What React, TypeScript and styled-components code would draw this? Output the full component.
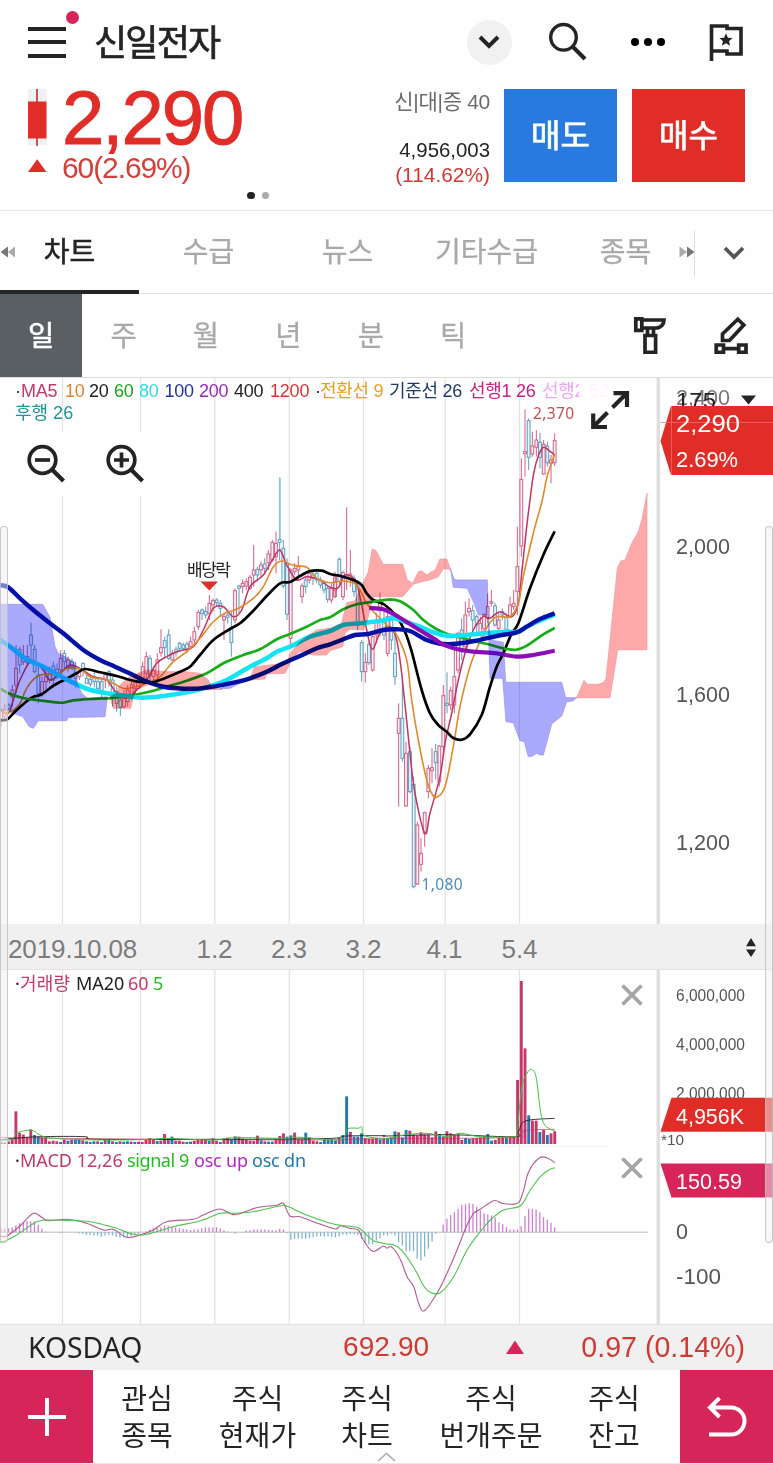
import React from 'react';
import styled, { createGlobalStyle } from 'styled-components';

const SANS = '"Liberation Sans", "Noto Sans CJK KR", sans-serif';
const NOTO = '"Noto Sans", "Noto Sans CJK KR", sans-serif';
const KR = '"Noto Sans CJK KR", "Liberation Sans", sans-serif';

const INK = '#222426';
const RED = '#e02d28';
const CRIMSON = '#d62659';
const UP = '#c4386a';
const DOWN = '#3585ad';

const GlobalStyle = createGlobalStyle`
  * { box-sizing: border-box; }
  body { margin: 0; background: #fff; font-family: ${SANS}; color: ${INK}; }
  button { border: 0; padding: 0; margin: 0; background: none; font: inherit; color: inherit; display: block; }
  svg { display: block; }
`;

const Page = styled.main`
  position: relative;
  width: 773px;
  height: 1464px;
  overflow: hidden;
  background: #fefefe;
  display: flex;
  flex-direction: column;
`;

/* ---------- header ---------- */
const Header = styled.header`
  height: 84px;
  padding: 0 30px 0 28px;
  display: flex;
  align-items: center;
`;
const MenuButton = styled.button`
  position: relative;
  width: 38px;
  height: 31px;
  display: flex;
  flex-direction: column;
  justify-content: space-between;
  margin-right: 28px;
`;
const MenuLine = styled.span`
  height: 4px;
  background: ${INK};
`;
const Alert = styled.i`
  position: absolute;
  left: 38px;
  top: -16px;
  width: 13px;
  height: 13px;
  border-radius: 50%;
  background: ${CRIMSON};
`;
const Title = styled.h1`
  margin: 0;
  flex: 1;
  font: 400 36px/50px ${KR};
  letter-spacing: -1.8px;
  padding-bottom: 4px;
  -webkit-text-stroke: 0.7px ${INK};
`;
const Tools = styled.div`
  display: flex;
  align-items: center;
`;
const Round = styled.button`
  width: 45px;
  height: 45px;
  border-radius: 50%;
  background: #f1f1f1;
  display: grid;
  place-items: center;
`;
const SearchIcon = styled.svg`
  margin-left: 36px;
`;
const DotsIcon = styled.svg`
  margin-left: 42.5px;
`;
const FlagIcon = styled.svg`
  margin-left: 43px;
`;

/* ---------- quote ---------- */
const Quote = styled.section`
  position: relative;
  height: 127px;
  border-bottom: 1px solid #e6e6e6;
  padding: 5px 28px 0 27px;
  display: flex;
`;
const PriceBlock = styled.div`
  width: 320px;
  display: grid;
  grid-template-columns: 35px 1fr;
  grid-template-rows: 61px 36px;
`;
const Price = styled.div`
  font-size: 76px;
  line-height: 57px;
  letter-spacing: -2px;
  color: ${RED};
  -webkit-text-stroke: 0.9px ${RED};
  white-space: nowrap;
`;
const Change = styled.div`
  font-size: 30px;
  line-height: 36px;
  letter-spacing: -1.1px;
  color: #d4403c;
`;
const Stats = styled.div`
  flex: 1;
  text-align: right;
  padding-right: 14px;
  white-space: nowrap;
`;
const Badges = styled.div`
  font: 21px/26px ${SANS};
  letter-spacing: -0.3px;
  color: #6b6b6b;
`;
const Volume = styled.div`
  font-size: 20.4px;
  line-height: 24px;
  margin-top: 23px;
  color: ${INK};
`;
const Ratio = styled.div`
  font-size: 20.9px;
  line-height: 25px;
  color: #cf3a35;
`;
const Trade = styled.button<{ $bg: string }>`
  width: 113px;
  height: 93px;
  background: ${p => p.$bg};
  color: #fff;
  font: 400 32px/89px ${KR};
  padding-bottom: 4px;
  -webkit-text-stroke: 0.7px #fff;
  & + & { margin-left: 15px; }
`;
const Pager = styled.div`
  position: absolute;
  left: 247px;
  top: 107.5px;
  display: flex;
  gap: 7px;
`;
const Dot = styled.i<{ $on?: boolean }>`
  width: 7.5px;
  height: 7.5px;
  border-radius: 50%;
  background: ${p => (p.$on ? '#222' : '#aaa')};
`;

/* ---------- tabs ---------- */
const Tabs = styled.nav`
  height: 83px;
  border-bottom: 1px solid #e2e2e2;
  display: flex;
  align-items: center;
  position: relative;
`;
const Tab = styled.button<{ $on?: boolean }>`
  width: 139px;
  height: 83px;
  font: 400 28px/78px ${KR};
  padding-bottom: 1px;
  color: ${p => (p.$on ? INK : '#a9a9a9')};
  -webkit-text-stroke: ${p => (p.$on ? 0.6 : 0.3)}px currentColor;
  border-bottom: 4px solid ${p => (p.$on ? INK : 'transparent')};
  white-space: nowrap;
  text-align: center;
`;
const ScrollMark = styled.span<{ $right?: boolean }>`
  position: absolute;
  top: 35px;
  ${p => (p.$right ? 'left: 679px;' : 'left: 0;')}
`;
const MoreTabs = styled.button`
  position: absolute;
  left: 694px;
  top: 19px;
  width: 79px;
  height: 46px;
  border-left: 1px solid #ddd;
  background: #fefefe;
  display: grid;
  place-items: center;
`;

const Periods = styled.nav`
  height: 84px;
  border-bottom: 1px solid #dcdcdc;
  display: flex;
  align-items: center;
`;
const Period = styled.button<{ $on?: boolean }>`
  width: 82.4px;
  height: 83px;
  font: 400 28.5px/80px ${KR};
  padding-bottom: 3px;
  background: ${p => (p.$on ? '#5a5f63' : 'transparent')};
  color: ${p => (p.$on ? '#fff' : '#a9a9a9')};
  -webkit-text-stroke: ${p => (p.$on ? 0.6 : 0.3)}px currentColor;
`;
const PeriodTools = styled.div`
  flex: 1;
  display: flex;
  justify-content: flex-end;
  align-items: center;
  gap: 47px;
  padding: 0 25px 1px 0;
`;

/* ---------- chart panels ---------- */
const Panel = styled.section<{ $h: number }>`
  position: relative;
  height: ${p => p.$h}px;
`;
const Legend = styled.div<{ $top: number; $font?: string }>`
  position: absolute;
  left: 15px;
  top: ${p => p.$top}px;
  height: 22px;
  display: flex;
  white-space: pre;
  font: 18px/22px ${p => p.$font ?? SANS};
`;
const Key = styled.span<{ $c: string; $w?: number; $ls?: number }>`
  color: ${p => p.$c};
  width: ${p => (p.$w ? `${p.$w}px` : 'auto')};
  letter-spacing: ${p => p.$ls ?? 0}px;
`;
const ZoomBar = styled.div`
  position: absolute;
  left: 10px;
  top: 54px;
  display: flex;
  gap: 7px;
`;
const ZoomButton = styled.button`
  width: 72px;
  height: 64px;
  background: #fefefe;
  display: grid;
  place-items: center;
`;
const Expand = styled.button`
  position: absolute;
  left: 579px;
  top: 1px;
  width: 71px;
  height: 62px;
  padding-right: 9px;
  background: rgba(255, 255, 255, 0.88);
  display: grid;
  place-items: center;
`;
const Close = styled.button<{ $top: number }>`
  position: absolute;
  left: 621px;
  top: ${p => p.$top}px;
`;
const DateAxis = styled.div`
  position: relative;
  height: 46px;
  background: #f0f0f0;
  border-bottom: 1px solid #e2e2e2;
  color: #7c7c7c;
  font-size: 26px;
  line-height: 50px;
  display: flex;
`;
const DateLabel = styled.span<{ $w: number; $first?: boolean }>`
  width: ${p => p.$w}px;
  text-align: ${p => (p.$first ? 'left' : 'center')};
  padding-left: ${p => (p.$first ? 8 : 0)}px;
  letter-spacing: ${p => (p.$first ? -0.1 : 0)}px;
`;
const Sorter = styled.span`
  margin-left: auto;
  padding: 14px 16px 0 0;
`;
const Rail = styled.i<{ $side: 'left' | 'right' }>`
  position: absolute;
  ${p => p.$side}: 0;
  top: 526px;
  width: 8px;
  height: 717px;
  border: 1px solid rgba(190, 190, 190, 0.8);
  border-radius: 4px;
  background: rgba(240, 240, 240, 0.5);
`;

/* ---------- footer ---------- */
const IndexBar = styled.div`
  height: 46px;
  background: #f0f0f0;
  border-top: 1px solid #e2e2e2;
  display: flex;
  align-items: center;
  padding: 0 28px 2px 28px;
  font-size: 28px;
  line-height: 44px;
  white-space: nowrap;
`;
const IndexName = styled.span`
  font-family: ${NOTO};
  font-size: 28.3px;
  width: 315px;
`;
const IndexValue = styled.span`
  width: 162px;
  color: #cf3a35;
  letter-spacing: 0.1px;
`;
const IndexChange = styled.span`
  margin-left: auto;
  color: #cf3a35;
  font-size: 28.6px;
`;
const Nav = styled.nav`
  position: relative;
  height: 94px;
  display: flex;
  border-bottom: 1px solid #e8e8e8;
`;
const NavSide = styled.button`
  width: 93px;
  height: 93px;
  background: ${CRIMSON};
  display: grid;
  place-items: center;
`;
const NavSideEnd = styled(NavSide)`
  margin-left: auto;
`;
const NavItem = styled.button<{ $w: number }>`
  width: ${p => p.$w}px;
  height: 93px;
  padding-bottom: 2px;
  font: 28px/37px ${KR};
  white-space: pre-line;
  text-align: center;
`;
const Handle = styled.svg`
  position: absolute;
  left: 377px;
  top: 82px;
`;

/* ---------- chart data (three units per pixel) ---------- */
type Pt = [number, number];
const parse = (s: string): Pt[] =>
  s.trim().split(/\s+/).map(p => p.split(',').map(Number) as Pt);
const at = (ox: number, oy: number, s: string): Pt[] =>
  parse(s).map(([x, y]) => [ox + x / 3, oy + y / 3]);
const L = (s: string) => at(0, 480, s);
const R = (s: string) => at(330, 500, s);
const T = (s: string) => at(387, 210, s);
const V = (s: string) => at(0, 920, s);
const W = (s: string) => at(387, 920, s);

const poly = (p: Pt[]) => p.map(q => q.map(v => v.toFixed(1)).join(',')).join(' ');
const smooth = (p: Pt[]) => {
  let d = `M${p[0][0]} ${p[0][1]}`;
  for (let i = 0; i < p.length - 1; i++) {
    const a = p[Math.max(0, i - 1)], b = p[i], c = p[i + 1], e = p[Math.min(p.length - 1, i + 2)];
    d += `C${(b[0] + (c[0] - a[0]) / 6).toFixed(1)} ${(b[1] + (c[1] - a[1]) / 6).toFixed(1)} ${(c[0] - (e[0] - b[0]) / 6).toFixed(1)} ${(c[1] - (e[1] - b[1]) / 6).toFixed(1)} ${c[0].toFixed(1)} ${c[1].toFixed(1)}`;
  }
  return d;
};

const GRID = [62.5, 140.5, 214.8, 289.3, 363.5, 445.2, 519.5];

const MA100 = [...L('0,315 25,322 60,355 100,390 150,430 190,460 250,510 300,540 345,560 395,583 430,600 480,618 530,625 590,626 640,620 700,608 750,595 800,575 850,550 900,528 950,505'), ...R('0,433 40,418 75,405 115,402 160,390 200,388 240,393 290,420 330,431 380,431 440,422 500,408 560,397 590,380 630,357 674,340')];
const MA80 = [...L('0,480 30,500 80,538 130,560 180,588 220,608 265,628 320,640 380,648 430,653 490,648 560,637 620,622 680,600 750,560 800,535 830,515 870,500 930,470'), ...R('0,393 40,375 90,370 150,363 190,355 225,365 270,380 310,397 350,407 400,406 460,400 530,395 565,395 600,375 674,343')];
const MA60 = [...L('0,625 25,640 60,652 100,659 150,665 190,668 220,661 270,657 340,654 400,645 460,632 500,620 560,602 620,580 670,550 730,525 780,508 830,478 870,462 920,440 960,420'), ...R('0,352 40,328 80,313 130,305 180,298 210,304 250,330 280,360 320,388 360,405 400,415 440,425 480,434 520,445 560,449 590,437 640,403 674,384')];
const MA20 = [...L('0,720 22,718 50,690 95,653 125,643 160,617 200,596 230,580 255,567 300,577 350,588 400,602 450,608 480,600 540,575 570,560 600,525 640,480 690,447 720,430 760,392 800,348 840,310 870,306 900,288 930,273 965,272'), ...R('0,222 40,230 90,250 110,280 130,300 165,315 200,350 225,395 245,455 275,570 300,640 325,675 350,695 370,714 395,719 420,703 455,645 480,560 500,500 520,460 545,400 565,370 600,265 640,165 674,94')];
const MA200 = R('118,324 160,328 205,350 260,385 310,415 340,434 380,447 430,455 500,460 560,470 610,465 674,452');
const MA10 = [...L('0,685 20,700 40,690 60,670 80,625 110,590 140,582 175,583 200,565 240,567 270,590 310,598 340,610 370,625 400,622 440,610 480,590 520,545 560,515 600,475 640,425 680,397 710,388 760,355 790,320 820,260 845,243 880,256 920,262 950,295'), ...R('0,248 40,243 80,255 110,310 140,345 180,385 200,405 230,480 245,600 265,720 290,840 305,880 320,892 345,860 370,740 390,620 420,500 450,425 475,375 500,350 540,350 565,310 580,230 610,100 637,0'), ...T('480,800 503,733')];
const MA5 = [...L('0,690 25,700 40,660 60,600 90,545 110,550 130,570 150,600 180,580 210,555 240,565 280,590 320,600 350,640 380,655 410,630 440,600 470,550 500,530 530,515 580,500 610,450 640,385 670,380 700,410 725,390 750,320 790,285 820,235 840,210 860,255 890,300 920,290 960,300'), ...R('0,262 25,263 45,225 75,240 90,290 110,390 127,448 150,400 180,380 200,420 215,520 240,760 255,880 285,1000 300,940 330,830 345,730 365,640 385,540 405,460 430,390 460,350 480,355 510,335 545,350 565,310 575,220 590,80 600,0'), ...T('440,790 455,735 470,712 490,725 503,735')];

const BLUE_CLOUDS = [
  L('0,373 128,373 150,412 165,500 175,520 205,535 225,550 232,610 245,640 262,655 322,650 315,710 240,712 205,712 200,722 160,722 115,722 100,745 88,740 68,710 40,700 20,690 0,690'),
  L('660,627 690,608 750,598 720,610 690,625'),
  R('362,208 372,237 380,240 472,240 474,345 445,345 432,310 412,265 370,262'),
  R('474,345 482,420 520,427 527,547 695,547 707,593 740,593 728,603 710,605 695,648 665,672 640,765 630,765 620,760 608,768 595,770 583,725 570,722 550,668 528,665 518,535 480,535'),
];
const PINK_CLOUDS = [
  L('330,650 350,640 360,615 390,590 440,570 500,575 560,575 600,580 625,600 635,620 665,628 610,630 550,632 480,615 440,615 410,630 400,650 392,685 340,685'),
  [...L('750,600 762,562 785,557 830,553 865,545 870,520 900,485 950,450 970,448'), ...R('0,385 35,370 50,308 75,303 90,265 100,248 115,215 127,147 138,152 160,193 218,193 232,240 248,250 265,215 275,212 290,225 300,218 315,210 330,177 350,177 362,208 340,206 325,230 300,240 275,245 250,253 218,290 130,290 112,360 100,390 60,388 45,400 38,440 0,452'), ...L('980,525 940,525 900,515 880,530 855,580 800,582 795,597')],
  R('740,593 762,541 772,553 805,553 822,547 828,535 840,420 862,205 872,183 885,180 905,130 925,95 935,60 951,-20 951,449 863,449 840,593'),
];

/* x, high, body top, body bottom, low, direction */
const LEFT = `3,685,690,725,740,u 14,670,690,710,720,u 26,670,675,685,690,d 37,615,630,650,680,u 48,495,565,615,640,u 59,500,508,555,580,d 70,495,535,545,555,u 82,495,530,548,560,u 93,428,465,495,540,d 104,495,508,575,580,d 115,560,585,640,670,d 126,590,605,640,650,u 138,560,590,605,635,u 149,560,570,600,610,u 160,545,558,600,625,d 171,550,568,590,598,d 182,510,535,570,590,u 193,510,520,545,565,d 204,530,540,560,575,u 216,535,545,560,570,d 227,545,565,595,625,d 238,565,575,590,600,u 249,548,550,570,590,d 260,580,595,610,612,d 271,590,598,612,620,d 283,575,590,605,622,d 294,590,605,625,640,d 305,595,605,640,655,d 316,575,580,600,625,u 327,570,575,600,620,d 338,590,600,650,680,d 350,620,635,670,695,d 361,640,660,682,708,d 372,630,655,680,685,u 383,615,630,665,680,u 395,600,615,650,660,u 406,600,608,625,640,u 417,580,590,605,615,u 428,545,560,595,610,u 439,515,530,580,600,u 450,525,535,585,600,d 460,560,570,590,600,u 472,520,540,585,600,u 483,448,503,518,530,u 494,470,482,503,530,d 506,448,465,535,540,d 517,510,520,540,545,u 528,500,508,518,530,d 539,485,490,505,515,d 550,488,495,505,512,d 561,485,492,510,520,d 572,470,485,500,510,u 583,440,455,480,490,u 595,390,397,440,450,u 606,385,390,400,420,d 617,380,395,405,415,d 628,345,370,400,420,u 639,355,362,375,395,u 650,355,360,368,380,d 661,360,370,385,410,d 672,400,410,420,480,u 683,390,405,412,430,d 694,395,445,488,530,d 705,325,332,420,430,u 717,315,318,325,400,d 728,298,310,320,340,u 739,295,305,318,330,u 750,285,292,325,330,u 761,195,270,285,320,u 772,260,268,285,305,d 783,245,255,270,290,u 794,235,252,265,285,d 805,210,222,248,270,u 817,180,187,240,245,u 828,155,190,230,280,u 839,-8,178,187,240,d 850,180,205,318,325,d 861,235,250,403,420,d 872,265,270,475,500,u 884,250,265,275,285,u 895,228,260,270,300,u 906,310,318,350,370,u 917,285,300,320,340,d 928,270,280,300,310,u 939,275,285,295,315,d 950,275,280,300,310,d 961,290,300,315,325,d 972,300,310,330,340,d 983,315,325,358,368,d 994,310,325,360,370,u 1005,275,290,350,355,u`;
const RIGHT = `16,230,245,270,290,u 28,172,178,245,260,d 39,212,218,290,300,u 50,22,225,235,270,u 61,150,222,235,260,u 72,225,235,275,290,d 83,240,255,375,390,d 95,420,428,515,545,d 106,460,487,515,548,u 117,425,433,488,495,d 128,400,410,510,515,u 139,340,365,405,430,u 150,278,305,330,410,u 162,325,360,405,420,d 173,330,350,460,470,u 184,330,360,420,450,d 195,390,460,530,555,d 206,610,655,700,920,u 217,540,655,775,785,d 228,725,760,918,920,u 240,740,755,875,880,d 251,830,853,1160,1165,d 262,965,975,1152,1155,u 273,1015,1060,1093,1115,u 284,935,938,1000,1040,u 295,795,805,875,895,u 306,745,803,812,850,u 317,732,755,788,838,d 328,735,738,845,860,u 340,555,587,740,770,u 351,517,610,616,640,d 362,560,572,615,630,u 373,440,530,615,640,u 384,395,400,510,520,u 395,355,390,455,480,d 406,305,345,440,450,u 417,295,325,335,350,u 428,315,332,360,400,d 440,345,350,375,410,d 451,350,370,400,410,u 462,340,345,385,410,u 473,280,320,355,370,u 484,270,305,310,320,u 495,308,318,375,380,d 506,340,360,385,400,u 517,325,335,345,360,d 529,340,352,388,400,d 540,290,315,350,355,u 551,270,310,320,330,u 562,80,200,275,345,u 574,-125,-62,138,170,u`;
const TOP = `414,598,725,731,800,u 425,625,632,742,780,d 436,665,708,732,740,u 448,660,690,712,740,u 459,668,697,742,775,d 470,690,703,792,795,u 481,695,708,758,770,d 492,735,750,760,820,u 503,670,692,758,768,u`;

type Candle = { x: number; h: number; t: number; b: number; l: number; up: boolean };
const candles = (ox: number, oy: number, s: string): Candle[] =>
  s.split(' ').map(c => {
    const v = c.split(',');
    const [x, h, t, b, l] = v.slice(0, 5).map(Number);
    return { x: ox + x / 3, h: oy + h / 3, t: oy + t / 3, b: oy + b / 3, l: oy + l / 3, up: v[5] === 'u' };
  });
const CANDLES = [...candles(0, 480, LEFT), ...candles(330, 500, RIGHT), ...candles(387, 210, TOP)];

const barX = (i: number) => (3 + 11.148 * i) / 3;

const VOLUMES = `5u 4d 8u 18u 98u 34u 28u 20u 44u 27d 21d 20u 20u 8u 10u 8u 6d 14u 10d 12u 12d 12d 11u 8d 6d 8d 8u 6d 12u 12d 8u 6d 8u 7d 8d 7u 6d 7u 6u 12u 18u 12u 9d 10u 30u 18u 22d 10u 10u 7u 6d 7d 10u 12u 15u 12u 10d 17u 9u 6d 14u 18u 12d 23d 22u 16u 12u 10u 9u 25u 11d 8u 7d 7d 14u 24u 32u 22d 26d 34u 14u 14u 34d 20u 10u 8u 6d 14d 12d 14d 10d 18u 27d 143d 36u 22d 22d 32d 18u 16u 16u 18u 14d 16u 17d 20d 38d 35u 20d 42d 40u 28u 26u 35u 28u 27u 20u 38u 30d 22u 38u 32u 30u 28u 12u 18d 15d 17u 18u 20u 24u 30d 10d 12u 18u 22u 18d 22u 22u 192u 489u 287u 86d 70u 70u 36d 42u 27d 32u 38u`.split(' ');
const RECENT = VOLUMES.slice(-11);
const EARLIER = VOLUMES.slice(0, 139);
const BARS = [...EARLIER, ...RECENT];

const OSC = [12, 10, 12, 15, 20, 27, 30, 33, 33, 32, 22, 10, 2, 0, 0, 0, -2, 0, 0, 0, -2, -4, -5, -8, -8, -10, -10, -14, -10, -8, -10, -14, -16, -16, -15, -12, -8, -6, 0, 3, 8, 12, 14, 14, 20, 20, 16, 14, 12, 10, 8, 7, 8, 9, 12, 15, 14, 14, 15, 12, 6, 2, 0, -5, 0, 0, 5, 6, 8, 8, 9, 8, 7, 6, 5, 10, 8, -3, -23, -20, -18, -20, -20, -18, -15, -13, -12, -13, -12, -14, -16, -12, -8, -8, -6, -6, -8, -20, -32, -36, -36, -25, -18, -10, -10, -5, -10, -30, -40, -57, -57, -57, -80, -85, -73, -50, -28, -5, 0, 22, 40, 52, 60, 70, 82, 84, 87, 85, 77, 65, 57, 54, 50, 44, 30, 24, 16, 8, 8, 8, 18, 48, 70, 70, 68, 60, 45, 38, 28, 15];

const VOL5 = [...V('0,660 35,658 50,640 75,632 100,632 120,645 160,655 300,660 450,658 500,655 640,660 700,653 850,655 900,652 1000,660 1030,655 1042,628 1060,624 1075,625 1085,621 1095,648'), ...W('0,655 50,645 120,640 180,650 220,640 280,650 380,650 390,630 405,500 420,460 433,448 447,470 460,570 470,610 485,625 503,632')];
const VOL20 = [...V('0,660 45,655 120,650 255,650 290,658 640,658 850,657 1000,655 1040,648 1150,647'), ...W('0,648 180,644 380,650 395,635 415,603 503,595')];
const VOL60 = [...V('0,653 300,656 900,660'), ...W('0,656 380,652 410,632 503,628')];
const MACD = [...V('0,948 20,948 60,918 100,880 125,892 145,902 205,898 260,910 310,930 340,928 380,952 420,945 460,930 500,905 580,898 610,885 660,867 705,884 770,863 830,856 850,850 870,888 900,890 940,905 1005,927 1020,917 1050,925 1075,930 1090,960 1118,994 1150,978'), ...W('0,985 12,980 30,1000 45,1030 60,1070 80,1100 95,1150 112,1172 150,1120 180,1060 210,990 240,915 260,880 280,868 320,842 345,850 370,853 395,848 410,810 425,755 458,713 485,716 503,728')];
const SIGNAL = [...V('0,965 10,965 50,945 110,905 150,900 210,902 270,905 340,922 400,943 440,943 520,920 600,903 660,880 700,880 760,875 840,858 860,858 920,885 1000,912 1070,922 1095,940 1120,962'), ...W('0,972 20,975 45,992 85,1050 110,1098 130,1117 160,1118 200,1070 240,990 280,935 310,900 350,870 400,857 430,810 460,770 485,750 503,743')];

const Grid = ({ y1, y2 }: { y1: number; y2: number }) => (
  <g>
    {GRID.map(x => <line key={x} x1={x} x2={x} y1={y1} y2={y2} stroke="#e2e2e2" strokeWidth="1.2" />)}
    <rect x="656.6" y={y1} width="3.3" height={y2 - y1} fill="#dedede" />
  </g>
);

const AxisText = ({ x = 676, y, w, size = 22, fill = '#555', children }: { x?: number; y: number; w: number; size?: number; fill?: string; children: string }) => (
  <text x={x} y={y} textLength={w} lengthAdjust="spacingAndGlyphs" fontSize={size} fill={fill} fontFamily={SANS}>{children}</text>
);

const Line = ({ p, c, w }: { p: Pt[]; c: string; w: number }) => (
  <path d={smooth(p)} fill="none" stroke={c} strokeWidth={w} strokeLinejoin="round" />
);

const Clouds = styled.g`
  mix-blend-mode: multiply;
`;

const PriceChart = () => (
  <svg width="773" height="546" viewBox="0 378 773 546">
    <Grid y1={378} y2={924} />
    <g>
      {CANDLES.map(c => (
        <g key={c.x} stroke={c.up ? UP : DOWN} strokeWidth="1" opacity="0.8">
          <line x1={c.x} x2={c.x} y1={c.h} y2={c.t} />
          <line x1={c.x} x2={c.x} y1={c.b} y2={c.l} />
          <rect x={c.x - 1.4} y={c.t} width="2.8" height={Math.max(1, c.b - c.t)} fill={c.up ? '#fdeef3' : '#e4f4fa'} />
        </g>
      ))}
      <line x1="279.8" x2="279.8" y1="478" y2="539" stroke="#8fbfd4" strokeWidth="1.8" />
    </g>
    <Line p={MA5} c="#bf3463" w={1.5} />
    <Line p={MA10} c="#e08a2c" w={1.6} />
    <Line p={MA20} c="#000" w={2.7} />
    <Line p={MA60} c="#17ad17" w={2.7} />
    <Line p={MA80} c="#12e4f4" w={4.6} />
    <Line p={MA100} c="#0512a8" w={4.4} />
    <Line p={MA200} c="#8c0cb8" w={4.2} />
    <Clouds fill="#aaaaff" stroke="#9a90ee" strokeWidth="0.7">
      {BLUE_CLOUDS.map((p, i) => <polygon key={i} points={poly(p)} />)}
    </Clouds>
    <Clouds fill="#ffaaaa" stroke="#ee98a4" strokeWidth="0.7">
      {PINK_CLOUDS.map((p, i) => <polygon key={i} points={poly(p)} />)}
    </Clouds>
    <path d="M200.5 581.5h17.500l-8.700 9z" fill={RED} />
    <text x="187" y="576" fontSize="17" textLength="44" fontFamily={KR} fill={INK}>배당락</text>
    <text x="533" y="418.500" fontSize="15.500" textLength="41" fontFamily={NOTO} fill="#c4504e">2,370</text>
    <text x="421.500" y="889.500" fontSize="15.500" textLength="41" fontFamily={NOTO} fill="#4c8fb6">1,080</text>
    <AxisText y={405} w={54} fill="#777">2,400</AxisText>
    <AxisText y={407.500} w={40} fill={INK}>175</AxisText>
    <path d="M741 395.500h15l-7.500 9z" fill={INK} />
    <path d="M773 406H671l-10.500 35 10.500 34h102z" fill={RED} />
    <path d="M660 422.500h113M671.500 406v69" stroke="#f07470" strokeWidth="0.700" />
    <AxisText y={431.500} w={64} size={23.500} fill="#fff">2,290</AxisText>
    <AxisText y={466.500} w={62} size={22.500} fill="#fff">2.69%</AxisText>
    <AxisText y={553.500} w={54}>2,000</AxisText>
    <AxisText y={702} w={54}>1,600</AxisText>
    <AxisText y={850} w={54}>1,200</AxisText>
  </svg>
);

const VolumeChart = () => (
  <svg width="773" height="177" viewBox="0 970 773 177">
    <Grid y1={970} y2={1147} />
    {BARS.map((v, i) => {
      const h = parseInt(v, 10) / 3;
      return <rect key={i} x={barX(i) - 1.400} y={1144 - h} width="2.900" height={h} fill={v.endsWith('u') ? UP : '#2179ad'} />;
    })}
    <Line p={VOL60} c="#c4386a" w={0.700} />
    <Line p={VOL20} c="#222" w={0.900} />
    <Line p={VOL5} c="#3cc43c" w={1} />
    <line x1="0" x2="608" y1="1146.500" y2="1146.500" stroke="#f2f2f2" />
    <AxisText y={1000.500} w={69} size={15.800}>6,000,000</AxisText>
    <AxisText y={1050} w={69} size={15.800}>4,000,000</AxisText>
    <AxisText y={1099} w={69} size={15.800}>2,000,000</AxisText>
    <path d="M773 1097.700H671.500l-11 34H773z" fill={RED} />
    <AxisText y={1123.500} w={68} size={22} fill="#fff">4,956K</AxisText>
    <AxisText x={661} y={1144.500} w={23} size={15}>*10</AxisText>
  </svg>
);

const MacdChart = () => (
  <svg width="773" height="177" viewBox="0 1147 773 177">
    <Grid y1={1147} y2={1324} />
    <line x1="0" x2="648" y1="1232.200" y2="1232.200" stroke="#bdbdbd" />
    {OSC.map((v, i) => (
      <line key={i} x1={barX(i)} x2={barX(i)} y1="1232.200" y2={1232.200 - v / 3} stroke={v > 0 ? '#cf7fd2' : '#7fb4cf'} strokeWidth="1.300" />
    ))}
    <Line p={MACD} c="#b45a90" w={1.100} />
    <Line p={SIGNAL} c="#4cc44c" w={1.100} />
    <path d="M660.500 1163.500H773v34H671.500z" fill={CRIMSON} />
    <AxisText y={1189} w={66} size={22} fill="#fff">150.59</AxisText>
    <AxisText y={1238.500} w={12} size={22}>0</AxisText>
    <AxisText y={1284} w={45} size={22}>-100</AxisText>
  </svg>
);

const Cross = () => (
  <svg width="22" height="22" viewBox="0 0 22 22"><path d="M1.500 1.500l19 19M20.500 1.500l-19 19" stroke="#a6a6a6" strokeWidth="3.800" /></svg>
);

const Magnifier = ({ plus }: { plus?: boolean }) => (
  <svg width="40" height="40" viewBox="0 0 40 40" fill="none" stroke={INK}>
    <circle cx="16.500" cy="16" r="13.300" strokeWidth="3.700" />
    <path d="M26 25.500l11.500 11.500" strokeWidth="4.200" />
    <path d={plus ? 'M9 16h15M16.500 8.500v15' : 'M9 16h15'} strokeWidth="3.700" />
  </svg>
);

const MA_KEYS: [string, string, number][] = [
  ['·', '#222', 6], ['MA5', UP, 44], ['10', '#dd8230', 24], ['20', '#222', 25], ['60', '#18a818', 25], ['80', '#30dce8', 25.500],
  ['100', '#2434a0', 34.500], ['200', '#9a28b8', 35], ['400', '#222', 36], ['1200', '#d43434', 45], ['·', '#222', 5],
  ['전환선 9', '#e8a01c', 69], ['기준선 26', '#1e3a66', 80], ['선행1 26', '#cc2080', 73], ['선행2 52', '#eda6f2', 70],
];

export default function App() {
  return (
    <Page>
      <GlobalStyle />
      <Header>
        <MenuButton aria-label="menu"><MenuLine /><MenuLine /><MenuLine /><Alert /></MenuButton>
        <Title>신일전자</Title>
        <Tools>
          <Round aria-label="more stocks">
            <svg width="22" height="16" viewBox="0 0 22 16"><path d="M2 3l9 9 9-9" fill="none" stroke={INK} strokeWidth="4" /></svg>
          </Round>
          <SearchIcon width="40" height="40" viewBox="0 0 40 40" fill="none" stroke={INK}>
            <circle cx="15.500" cy="15.300" r="12.800" strokeWidth="3.400" /><path d="M24.500 24.500l12.500 12.500" strokeWidth="4" />
          </SearchIcon>
          <DotsIcon width="36" height="10" viewBox="0 0 36 10">
            <circle cx="5" cy="5" r="4" /><circle cx="18" cy="5" r="4" /><circle cx="31" cy="5" r="4" />
          </DotsIcon>
          <FlagIcon width="34" height="38" viewBox="0 0 34 38" fill="none" stroke={INK} strokeWidth="3.600">
            <path d="M2.500 38V3H18v2.500h14V31H18v-3H2.500" />
            <path d="M17 10.200l1.900 4.500 4.700.4-3.600 3.100 1.200 4.600-4.200-2.500-4.200 2.500 1.200-4.600-3.600-3.100 4.700-.4z" fill={INK} stroke="none" />
          </FlagIcon>
        </Tools>
      </Header>

      <Quote>
        <PriceBlock>
          <svg width="20" height="60" viewBox="0 0 20 60">
            <rect x="1" y="0" width="18.500" height="56" fill="#f0f0f0" />
            <path d="M10 -1v58" stroke="#b8302c" strokeWidth="1.600" />
            <rect x="1" y="12.500" width="18.500" height="37" fill={RED} />
          </svg>
          <Price>2,290</Price>
          <svg width="20" height="30" viewBox="0 0 20 30"><path d="M1 22L10.200 9.300 19.500 22z" fill={RED} /></svg>
          <Change>60(2.69%)</Change>
        </PriceBlock>
        <Stats>
          <Badges>신|대|증 40</Badges>
          <Volume>4,956,003</Volume>
          <Ratio>(114.62%)</Ratio>
        </Stats>
        <Trade $bg="#287adf">매도</Trade>
        <Trade $bg={RED}>매수</Trade>
        <Pager><Dot $on /><Dot /></Pager>
      </Quote>

      <Tabs>
        <Tab $on>차트</Tab>
        <Tab>수급</Tab>
        <Tab>뉴스</Tab>
        <Tab>기타수급</Tab>
        <Tab>종목</Tab>
        <ScrollMark>
          <svg width="16" height="12" viewBox="0 0 16 12"><path d="M8 .5v11L.5 6z" fill="#777" /><path d="M15 .5v11L8 6z" fill="#aaa" /></svg>
        </ScrollMark>
        <ScrollMark $right>
          <svg width="16" height="12" viewBox="0 0 16 12"><path d="M.5.5v11L8 6z" fill="#aaa" /><path d="M8 .5v11L15.500 6z" fill="#777" /></svg>
        </ScrollMark>
        <MoreTabs aria-label="more tabs">
          <svg width="22" height="16" viewBox="0 0 22 16"><path d="M2 3l9 9 9-9" fill="none" stroke="#555" strokeWidth="3.800" /></svg>
        </MoreTabs>
      </Tabs>

      <Periods>
        {['일', '주', '월', '년', '분', '틱'].map((p, i) => <Period key={p} $on={i === 0}>{p}</Period>)}
        <PeriodTools>
          <svg width="34" height="38" viewBox="0 0 34 38" fill="none" stroke={INK} strokeWidth="3.700">
            <path d="M2.800 2.800h6v11.500h-6zM8.800 4H31c0 4-3 8-8 8H8.800M14.500 12v6M20.500 12v6M12 19.500h10.600v16.800H12z" />
          </svg>
          <svg width="34" height="38" viewBox="0 0 34 38" fill="none" stroke={INK} strokeWidth="3.700">
            <path d="M8.500 24.500V18L23.800 3.200l6 5.800L15.500 24.500zM2.200 29h7.300v7.300H2.200zM24.700 29H32v7.300h-7.300zM9.500 32.700h15" />
          </svg>
        </PeriodTools>
      </Periods>

      <Panel $h={546}>
        <PriceChart />
        <Legend $top={2}>
          {MA_KEYS.map(([t, c, w], i) => <Key key={i} $c={c} $w={w} $ls={i > 10 ? -0.300 : -0.200}>{t}</Key>)}
        </Legend>
        <Legend $top={24}><Key $c="#1d9494">후행 26</Key></Legend>
        <ZoomBar>
          <ZoomButton aria-label="zoom out"><Magnifier /></ZoomButton>
          <ZoomButton aria-label="zoom in"><Magnifier plus /></ZoomButton>
        </ZoomBar>
        <Expand aria-label="full screen">
          <svg width="40" height="40" viewBox="0 0 40 40" fill="none" stroke={INK} strokeWidth="4.200">
            <path d="M22.500 17.500L36 4M23.500 3.200H37V17M17.500 22.500L4 36M3.200 23.500V37H17" />
          </svg>
        </Expand>
      </Panel>

      <DateAxis>
        <DateLabel $w={177} $first>2019.10.08</DateLabel>
        <DateLabel $w={75}>1.2</DateLabel>
        <DateLabel $w={74}>2.3</DateLabel>
        <DateLabel $w={75}>3.2</DateLabel>
        <DateLabel $w={87}>4.1</DateLabel>
        <DateLabel $w={63}>5.4</DateLabel>
        <Sorter><svg width="12" height="20" viewBox="0 0 12 20"><path d="M1 8.300L6 0l5 8.300zM1 11.500L6 19l5-7.500z" fill={INK} /></svg></Sorter>
      </DateAxis>

      <Panel $h={177}>
        <VolumeChart />
        <Legend $top={2} $font={NOTO}>
          <Key $c="#222" $w={5}>·</Key><Key $c={UP} $w={56} $ls={0.200}>거래량</Key>
          <Key $c="#222" $w={52}>MA20</Key><Key $c={UP} $w={25}>60</Key><Key $c="#22bb22">5</Key>
        </Legend>
        <Close $top={13.500} aria-label="close volume"><Cross /></Close>
      </Panel>

      <Panel $h={177}>
        <MacdChart />
        <Legend $top={2} $font={NOTO}>
          <Key $c="#222" $w={5}>·</Key><Key $c={UP} $w={107}>MACD 12,26</Key>
          <Key $c="#22bb22" $w={67} $ls={-0.400}>signal 9</Key><Key $c="#b826c8" $w={58} $ls={-0.200}>osc up</Key><Key $c="#2179ad" $ls={-0.200}>osc dn</Key>
        </Legend>
        <Close $top={10} aria-label="close MACD"><Cross /></Close>
      </Panel>

      <IndexBar>
        <IndexName>KOSDAQ</IndexName>
        <IndexValue>692.90</IndexValue>
        <svg width="20" height="16" viewBox="0 0 20 16"><path d="M1 15L10 1.500 19 15z" fill={CRIMSON} /></svg>
        <IndexChange>0.97 (0.14%)</IndexChange>
      </IndexBar>

      <Nav>
        <NavSide aria-label="add">
          <svg width="38" height="38" viewBox="0 0 38 38"><path d="M0 19h38M19 0v38" stroke="#fff" strokeWidth="4" /></svg>
        </NavSide>
        <NavItem $w={108}>{'관심\n종목'}</NavItem>
        <NavItem $w={113}>{'주식\n현재가'}</NavItem>
        <NavItem $w={106}>{'주식\n차트'}</NavItem>
        <NavItem $w={142}>{'주식\n번개주문'}</NavItem>
        <NavItem $w={104}>{'주식\n잔고'}</NavItem>
        <NavSideEnd aria-label="back">
          <svg width="40" height="40" viewBox="0 0 40 40" fill="none" stroke="#fff" strokeWidth="4">
            <path d="M12.500 1L3 10.500l9.500 9.500M3 10.500h21a13.500 13.500 0 0 1 0 27H2" />
          </svg>
        </NavSideEnd>
        <Handle width="19" height="10" viewBox="0 0 19 10"><path d="M1 9l8.500-7.500L18 9" fill="none" stroke="#aaa" strokeWidth="1.600" /></Handle>
      </Nav>

      <Rail $side="left" />
      <Rail $side="right" />
    </Page>
  );
}
